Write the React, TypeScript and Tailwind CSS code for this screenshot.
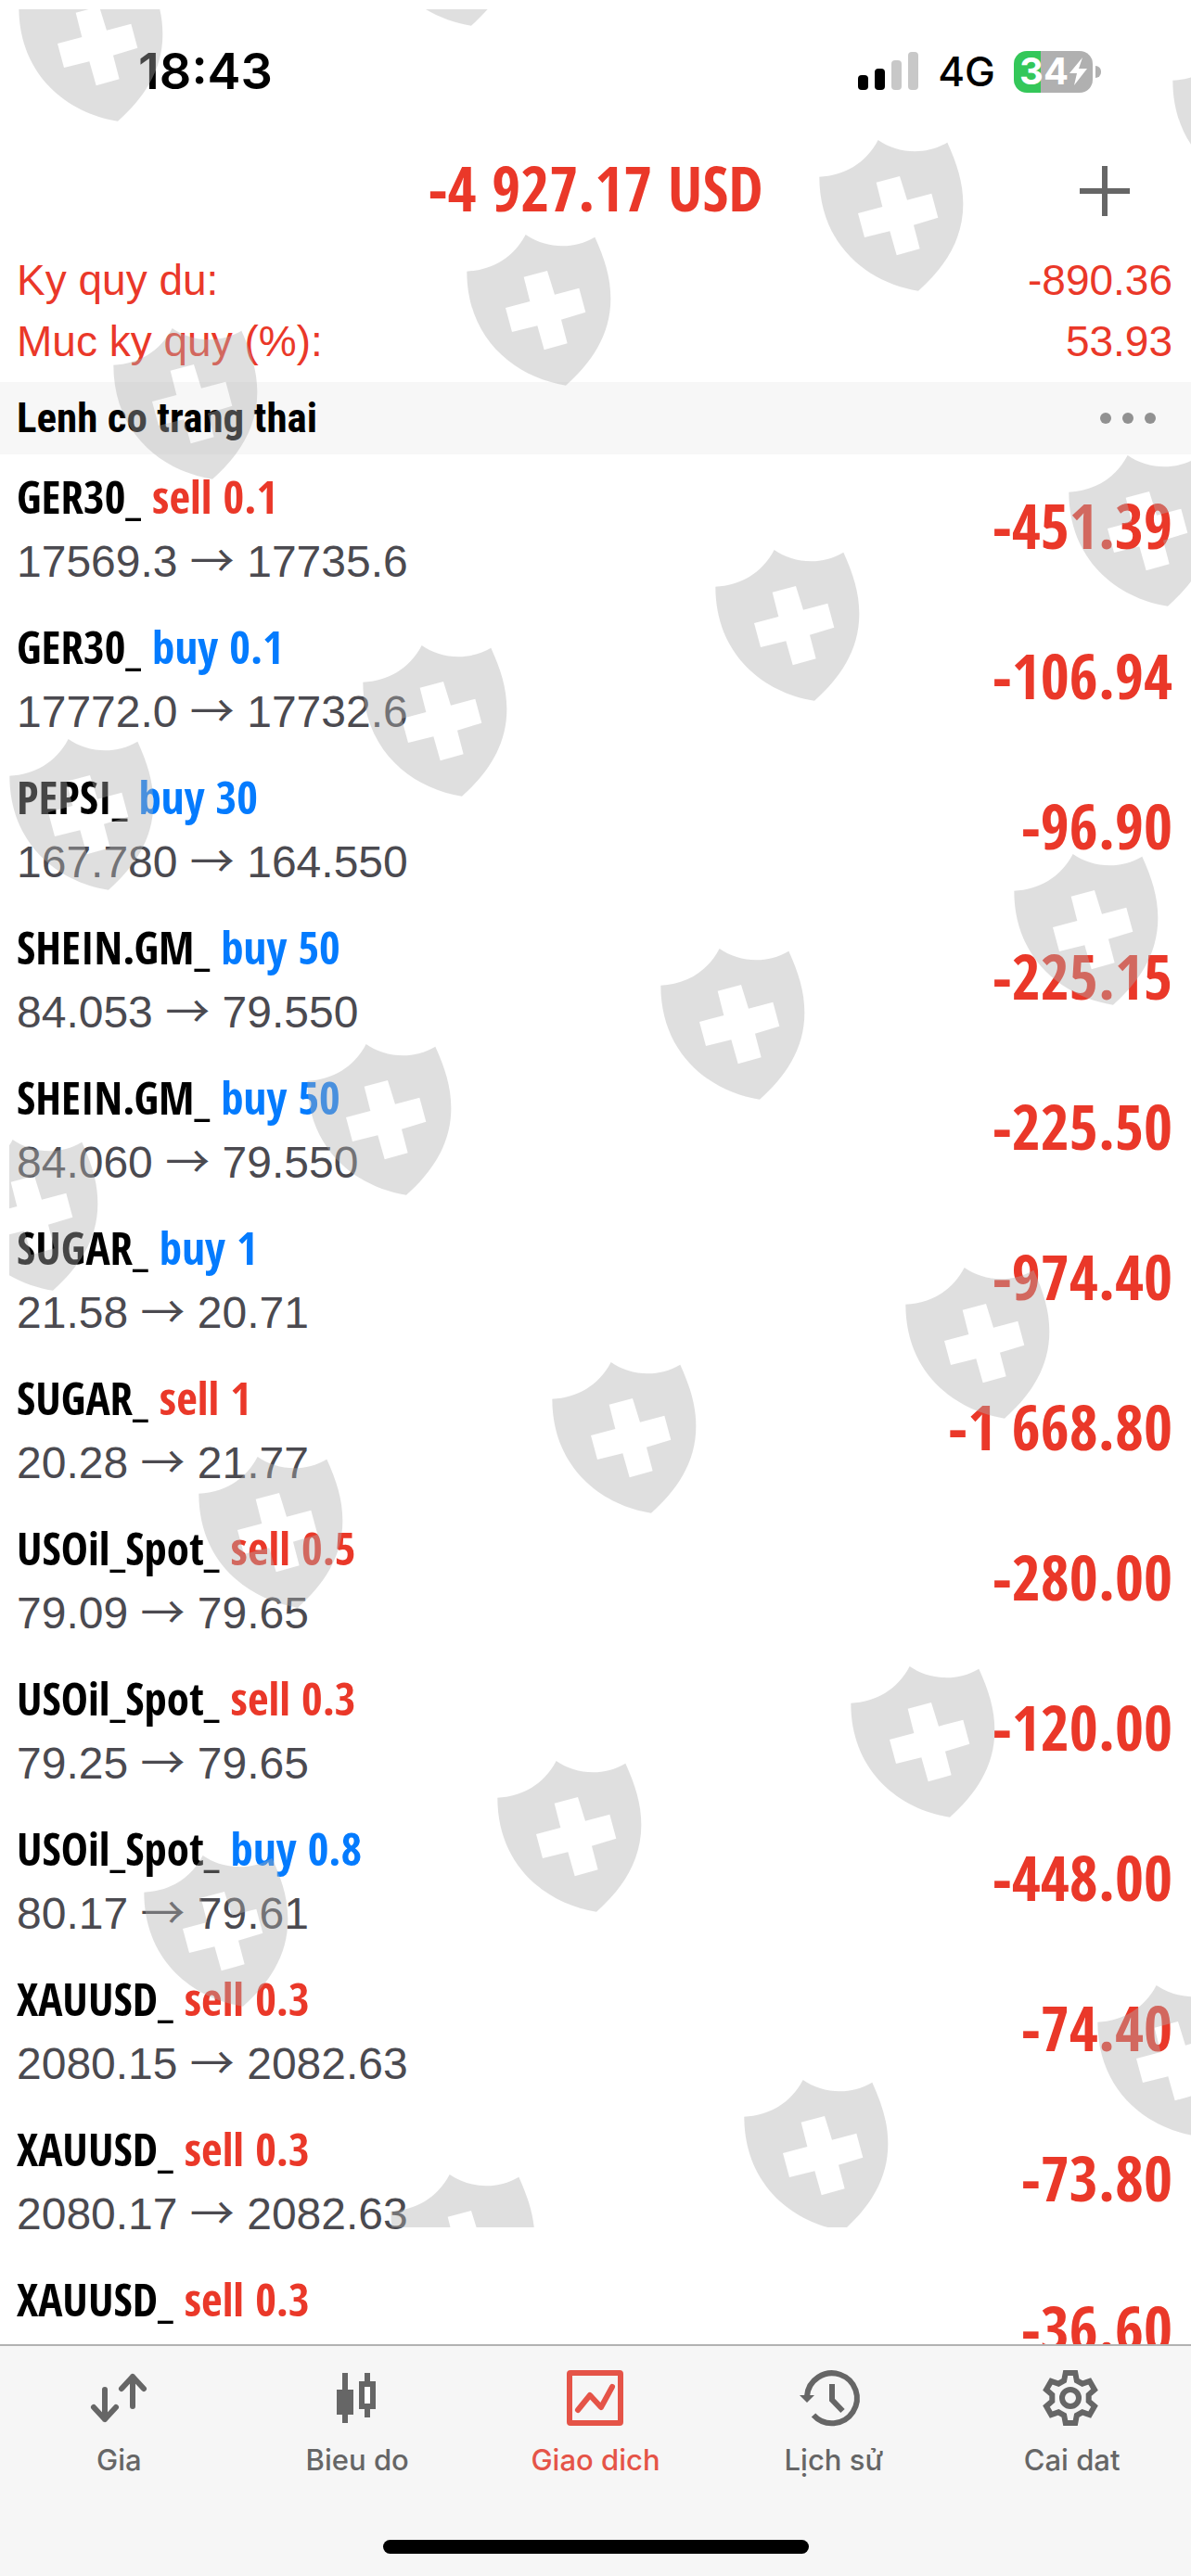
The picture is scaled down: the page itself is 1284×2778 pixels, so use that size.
import { useState } from "react";
import clsx from "clsx";

type Position = {
    symbol: string;
    side: "sell" | "buy";
    volume: string;
    open?: string;
    current?: string;
    profit: string;
};

const positions: Position[] = [
    { symbol: "GER30_", side: "sell", volume: "0.1", open: "17569.3", current: "17735.6", profit: "-451.39" },
    { symbol: "GER30_", side: "buy", volume: "0.1", open: "17772.0", current: "17732.6", profit: "-106.94" },
    { symbol: "PEPSI_", side: "buy", volume: "30", open: "167.780", current: "164.550", profit: "-96.90" },
    { symbol: "SHEIN.GM_", side: "buy", volume: "50", open: "84.053", current: "79.550", profit: "-225.15" },
    { symbol: "SHEIN.GM_", side: "buy", volume: "50", open: "84.060", current: "79.550", profit: "-225.50" },
    { symbol: "SUGAR_", side: "buy", volume: "1", open: "21.58", current: "20.71", profit: "-974.40" },
    { symbol: "SUGAR_", side: "sell", volume: "1", open: "20.28", current: "21.77", profit: "-1 668.80" },
    { symbol: "USOil_Spot_", side: "sell", volume: "0.5", open: "79.09", current: "79.65", profit: "-280.00" },
    { symbol: "USOil_Spot_", side: "sell", volume: "0.3", open: "79.25", current: "79.65", profit: "-120.00" },
    { symbol: "USOil_Spot_", side: "buy", volume: "0.8", open: "80.17", current: "79.61", profit: "-448.00" },
    { symbol: "XAUUSD_", side: "sell", volume: "0.3", open: "2080.15", current: "2082.63", profit: "-74.40" },
    { symbol: "XAUUSD_", side: "sell", volume: "0.3", open: "2080.17", current: "2082.63", profit: "-73.80" },
    { symbol: "XAUUSD_", side: "sell", volume: "0.3", profit: "-36.60" },
];

const shields = [
    [368, -166], [-13, -63], [1231, 16],
    [850, 120], [470, 222], [89, 323],
    [1119, 460], [738, 562], [358, 665], [-23, 766],
    [1060, 890], [679, 992], [298, 1095], [-83, 1198],
    [943, 1336], [562, 1438], [181, 1540],
    [884, 1766], [503, 1868], [122, 1970],
    [1150, 2110], [769, 2212], [388, 2314],
];

function Watermark() {
    return (
        <svg
            className="pointer-events-none absolute left-[10px] top-[10px] h-[2392px] w-full fill-[#b0b0b0] opacity-40"
            aria-hidden="true"
        >
            {shields.map(([x, y]) => (
                <path
                    key={`${x},${y}`}
                    transform={`translate(${x} ${y}) scale(0.33333)`}
                    fillRule="evenodd"
                    d="M70 182C150 178 220 140 260 63C320 105 410 115 484 71C515 140 535 200 535 270C535 390 470 480 390 551C225 525 70 400 70 182ZM330 180L254 200L274 279L195 300L216 378L298 358L320 436L395 415L375 338L454 314L433 236L354 257Z"
                />
            ))}
        </svg>
    );
}

function PricesIcon() {
    return (
        <svg className="size-16" viewBox="0 0 64 64" fill="none" stroke="currentColor" strokeWidth="6" strokeLinecap="round" strokeLinejoin="round">
            <path d="M17 23V55M5 42L17 55L29 42" />
            <path d="M47 41V9M35 22L47 9L59 22" />
        </svg>
    );
}

function CandlesIcon() {
    return (
        <svg className="size-16" viewBox="0 0 64 64" fill="currentColor">
            <path d="M16 5h6v18h6v27h-6v9h-6v-9h-6V23h6z" />
            <path d="M40 5h6v9h6v30h-6v9h-6v-9h-6V14h6z" />
            <rect x="40" y="20" width="6" height="18" fill="#fff" />
        </svg>
    );
}

function TradeIcon() {
    return (
        <svg className="size-16" viewBox="0 0 64 64" fill="none" stroke="currentColor" strokeWidth="6" strokeLinecap="round" strokeLinejoin="round">
            <rect x="4" y="5" width="55" height="54" rx="1" />
            <path d="M13 45L26 29L38 42L50 20" />
        </svg>
    );
}

function HistoryIcon() {
    return (
        <svg className="size-16 overflow-visible" viewBox="0 0 64 64" fill="none" stroke="currentColor" strokeWidth="6">
            <path d="M3 30A27 27 0 1 1 10 50.500" />
            <path d="M30 17V34L41.500 46" />
            <path d="M-5 29H11L3 37Z" fill="currentColor" stroke="none" />
        </svg>
    );
}

// six teeth, each one a trapezoid standing on the inner radius
const gearPoints = [0, 60, 120, 180, 240, 300]
    .flatMap((tooth) =>
        [[20, -20], [27.5, -11], [27.5, 11], [20, 20]].map(([r, offset]) => {
            const angle = ((tooth + offset - 90) * Math.PI) / 180;
            return `${(30 + r * Math.cos(angle)).toFixed(2)},${(32 + r * Math.sin(angle)).toFixed(2)}`;
        })
    )
    .join(" ");

function SettingsIcon() {
    return (
        <svg className="size-16" viewBox="0 0 64 64" fill="none" stroke="currentColor" strokeWidth="6">
            <polygon points={gearPoints} />
            <circle cx="30" cy="32" r="9" />
        </svg>
    );
}

const tabs = [
    { label: "Gia", Icon: PricesIcon },
    { label: "Bieu do", Icon: CandlesIcon },
    { label: "Giao dich", Icon: TradeIcon },
    { label: "Lịch sử", Icon: HistoryIcon },
    { label: "Cai dat", Icon: SettingsIcon },
];

function StatusBar() {
    return (
        <div className="flex h-[154px] shrink-0 items-center justify-between pl-[149px] pr-[97px] font-[Inter,sans-serif] text-black">
            <span className="text-[54px] font-semibold leading-none">18:43</span>
            <div className="flex items-center">
                <svg className="h-[42px] w-[66px]" viewBox="0 0 66 42">
                    <rect x="0" y="25" width="11" height="16" rx="4" />
                    <rect x="18" y="18" width="11" height="23" rx="4" />
                    <rect x="36" y="9" width="11" height="32" rx="4" fill="#c8c8c8" />
                    <rect x="54" y="0" width="11" height="41" rx="4" fill="#c8c8c8" />
                </svg>
                <span className="ml-5 text-[44px] font-medium leading-none">4G</span>
                <div className="ml-5 flex items-center gap-[3px]">
                    <div className="flex h-[45px] w-[85px] items-center justify-center rounded-[14px] bg-linear-to-r from-[#34c759] from-34% to-[#b0b0b0] to-34% text-white">
                        <span className="text-[40px] font-bold leading-none">34</span>
                        <svg className="h-[30px] w-5" viewBox="0 0 20 30" fill="currentColor">
                            <path d="M15 0L1 17H9L6 30L20 12H11Z" />
                        </svg>
                    </div>
                    <div className="h-[13px] w-[6px] rounded-r-full bg-[#b0b0b0]" />
                </div>
            </div>
        </div>
    );
}

export default function App() {
    const [active, setActive] = useState("Giao dich");

    return (
        <div className="relative flex h-screen w-full flex-col overflow-hidden bg-white font-['Liberation_Sans',Arial,sans-serif]">
            <StatusBar />

            <header className="grid h-[104px] shrink-0 grid-cols-[1fr_auto_1fr] items-center">
                <h1 className="col-start-2 pb-2 font-['Open_Sans_Condensed','Open_Sans',sans-serif] text-[67px] font-bold leading-[76px] text-[#ea3829]">
                    -4 927.17 USD
                </h1>
                <button type="button" aria-label="New order" className="mr-[66px] justify-self-end text-[#666]">
                    <svg className="size-[54px]" viewBox="0 0 54 54" stroke="currentColor" strokeWidth="6">
                        <path d="M27 0V54M0 27H54" />
                    </svg>
                </button>
            </header>

            <dl className="shrink-0 py-[11px] pl-[18px] pr-5 text-[46px] leading-[66px] text-[#ea3829]">
                <div className="flex justify-between">
                    <dt>Ky quy du:</dt>
                    <dd>-890.36</dd>
                </div>
                <div className="flex justify-between">
                    <dt>Muc ky quy (%):</dt>
                    <dd>53.93</dd>
                </div>
            </dl>

            <div className="flex h-[78px] shrink-0 items-center justify-between bg-[#f7f7f7] pl-[18px] pr-[38px]">
                <h2 className="font-['Roboto_Condensed',Roboto,sans-serif] text-[45px] font-bold text-black">
                    Lenh co trang thai
                </h2>
                <button type="button" aria-label="More" className="flex gap-3">
                    <span className="size-3 rounded-full bg-[#919191]" />
                    <span className="size-3 rounded-full bg-[#919191]" />
                    <span className="size-3 rounded-full bg-[#919191]" />
                </button>
            </div>

            <ul className="min-h-0 flex-1 overflow-hidden">
                {positions.map((position, idx) => (
                    <li key={idx} className="flex items-start justify-between pb-2 pl-[18px] pr-5 pt-3">
                        <div>
                            <p className="font-['Open_Sans_Condensed','Open_Sans',sans-serif] text-[49px] font-bold leading-[66px] text-black">
                                {position.symbol}{" "}
                                <span className={position.side === "sell" ? "text-[#ea3829]" : "text-[#047bfe]"}>
                                    {position.side} {position.volume}
                                </span>
                            </p>
                            {position.open && (
                                <p className="text-[48px] leading-[76px] text-[#4b4a50]">
                                    {position.open}{" "}
                                    <span className="font-['Noto_Sans_CJK_JP',sans-serif] leading-none">→</span>{" "}
                                    {position.current}
                                </p>
                            )}
                        </div>
                        <span className="font-['Open_Sans_Condensed','Open_Sans',sans-serif] text-[67px] font-bold leading-[128px] text-[#ea3829]">
                            {position.profit}
                        </span>
                    </li>
                ))}
            </ul>

            <Watermark />

            <nav className="shrink-0 border-t-2 border-[#b2b2b2] bg-[#f6f6f6] py-6 font-[Inter,sans-serif]">
                <div className="grid grid-cols-5">
                    {tabs.map(({ label, Icon }) => (
                        <button
                            type="button"
                            key={label}
                            onClick={() => setActive(label)}
                            className={clsx(
                                "flex flex-col items-center gap-4 text-[31px] font-medium leading-[38px]",
                                active === label ? "text-[#e55448]" : "text-[#666]"
                            )}
                        >
                            <Icon />
                            {label}
                        </button>
                    ))}
                </div>
                <div className="mx-auto mt-[67px] h-[15px] w-[459px] rounded-full bg-black" />
            </nav>
        </div>
    );
}
